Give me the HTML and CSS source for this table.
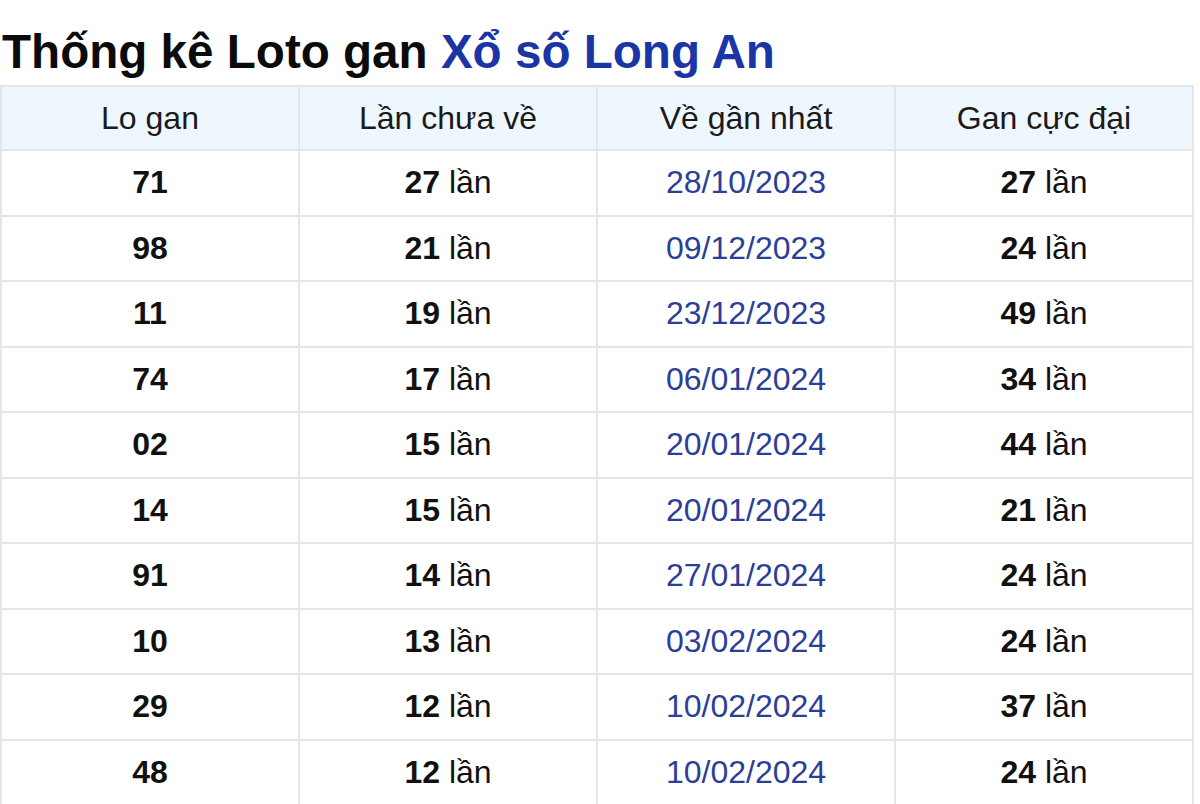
FILE: index.html
```html
<!DOCTYPE html>
<html lang="vi">
<head>
<meta charset="utf-8">
<link rel="stylesheet" href="styles.css">
</head>
<body>
<h1 class="title">Thống kê Loto gan <span class="title-accent">Xổ số Long An</span></h1>
<table class="stats">
  <thead>
    <tr><th>Lo gan</th><th>Lần chưa về</th><th>Về gần nhất</th><th>Gan cực đại</th></tr>
  </thead>
  <tbody>
    <tr><td class="num">71</td><td><b>27</b> lần</td><td class="date">28/10/2023</td><td><b>27</b> lần</td></tr>
    <tr><td class="num">98</td><td><b>21</b> lần</td><td class="date">09/12/2023</td><td><b>24</b> lần</td></tr>
    <tr><td class="num">11</td><td><b>19</b> lần</td><td class="date">23/12/2023</td><td><b>49</b> lần</td></tr>
    <tr><td class="num">74</td><td><b>17</b> lần</td><td class="date">06/01/2024</td><td><b>34</b> lần</td></tr>
    <tr><td class="num">02</td><td><b>15</b> lần</td><td class="date">20/01/2024</td><td><b>44</b> lần</td></tr>
    <tr><td class="num">14</td><td><b>15</b> lần</td><td class="date">20/01/2024</td><td><b>21</b> lần</td></tr>
    <tr><td class="num">91</td><td><b>14</b> lần</td><td class="date">27/01/2024</td><td><b>24</b> lần</td></tr>
    <tr><td class="num">10</td><td><b>13</b> lần</td><td class="date">03/02/2024</td><td><b>24</b> lần</td></tr>
    <tr><td class="num">29</td><td><b>12</b> lần</td><td class="date">10/02/2024</td><td><b>37</b> lần</td></tr>
    <tr><td class="num">48</td><td><b>12</b> lần</td><td class="date">10/02/2024</td><td><b>24</b> lần</td></tr>
  </tbody>
</table>
</body>
</html>
```

FILE: styles.css
```css
html, body {
  margin: 0;
  padding: 0;
  background: #fff;
}
body {
  font-family: "Liberation Sans", Arial, sans-serif;
  color: #111;
}
.title {
  margin: 0;
  padding: 24px 0 6px 2px;
  font-size: 47.6px;
  line-height: 55px;
  font-weight: bold;
  color: #0b0b0b;
}
.title-accent {
  color: #1b35a6;
}
.stats {
  width: 1194px;
  border-collapse: collapse;
  table-layout: fixed;
  font-size: 32px;
}
.stats th,
.stats td {
  border: 2px solid #e3e6ea;
  text-align: center;
  padding: 0;
  height: 63.5px;
  line-height: 37px;
}
.stats th {
  height: 62px;
  background: #eef6fe;
  font-weight: normal;
  color: #1a1a1a;
}
.stats td b,
.stats td.num {
  font-weight: bold;
  color: #111;
}
.stats td.date {
  color: #2b3e98;
}
```
